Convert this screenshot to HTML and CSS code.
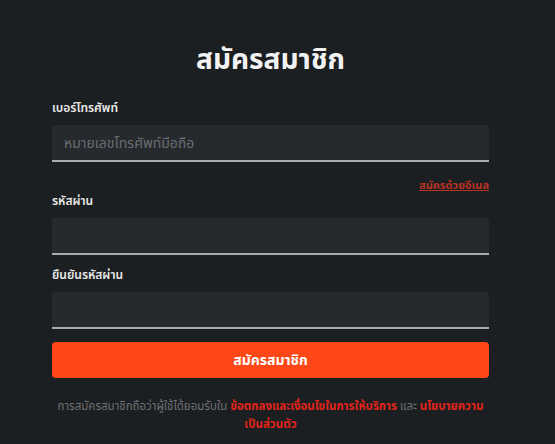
FILE: index.html
```html
<!DOCTYPE html>
<html lang="th">
<head>
<meta charset="utf-8">
<link rel="stylesheet" href="styles.css">
</head>
<body>
<div class="page">
  <form class="form">
    <h1 class="title">สมัครสมาชิก</h1>
    <label class="label">เบอร์โทรศัพท์</label>
    <div class="field"><input class="input" type="text" placeholder="หมายเลขโทรศัพท์มือถือ"></div>
    <div class="alt"><a class="alt-link" href="#">สมัครด้วยอีเมล</a></div>
    <label class="label">รหัสผ่าน</label>
    <div class="field"><input class="input" type="password"></div>
    <label class="label label-gap">ยืนยันรหัสผ่าน</label>
    <div class="field"><input class="input" type="password"></div>
    <button class="submit" type="button">สมัครสมาชิก</button>
    <p class="terms">การสมัครสมาชิกถือว่าผู้ใช้ได้ยอมรับใน <a class="terms-link" href="#">ข้อตกลงและเงื่อนไขในการให้บริการ</a> และ <a class="terms-link" href="#">นโยบายความ<wbr>เป็นส่วนตัว</a></p>
  </form>
</div>
</body>
</html>
```
FILE: styles.css
```css
html, body {
  margin: 0;
  padding: 0;
  background: #1c1f21;
}
body {
  font-family: "Noto Sans", "Noto Sans Thai", "Liberation Sans", sans-serif;
  color: #e6e6e6;
}
.page {
  padding: 0 66px 0 52px;
}
.form {
  display: flex;
  flex-direction: column;
  width: 437px;
}
.title {
  margin: 35px 0 0;
  height: 46px;
  line-height: 46px;
  font-size: 28px;
  font-weight: 700;
  text-align: center;
  color: #f2f2f2;
}
.label {
  display: block;
  margin-top: 18px;
  height: 18px;
  line-height: 18px;
  font-size: 12px;
  font-weight: 600;
  color: #e8e8e8;
}
.label-gap {
  margin-top: 11px;
}
.alt + .label {
  margin-top: 1px;
}
.field {
  margin-top: 8px;
  height: 35px;
  background: #26292d;
  border-bottom: 2px solid #a9acaf;
  border-radius: 3px 3px 0 0;
}
.input {
  box-sizing: border-box;
  width: 100%;
  height: 35px;
  border: 0;
  outline: 0;
  background: transparent;
  padding: 0 12px;
  font-family: inherit;
  font-size: 14px;
  color: #e6e6e6;
}
.input::placeholder {
  color: #6a6d71;
}
.alt {
  margin-top: 13px;
  height: 16px;
  line-height: 16px;
  text-align: right;
}
.alt-link {
  font-size: 11px;
  font-weight: 700;
  color: #b83222;
  text-decoration: underline;
}
.submit {
  margin-top: 13px;
  height: 36px;
  border: 0;
  border-radius: 4px;
  background: #fe4716;
  color: #ffffff;
  font-family: inherit;
  font-size: 14px;
  font-weight: 700;
}
.terms {
  margin: 19px 0 0;
  line-height: 18px;
  font-size: 11.5px;
  text-align: center;
  color: #6d7074;
}
.terms-link {
  color: #e2241b;
  font-weight: 700;
  text-decoration: none;
}
```
